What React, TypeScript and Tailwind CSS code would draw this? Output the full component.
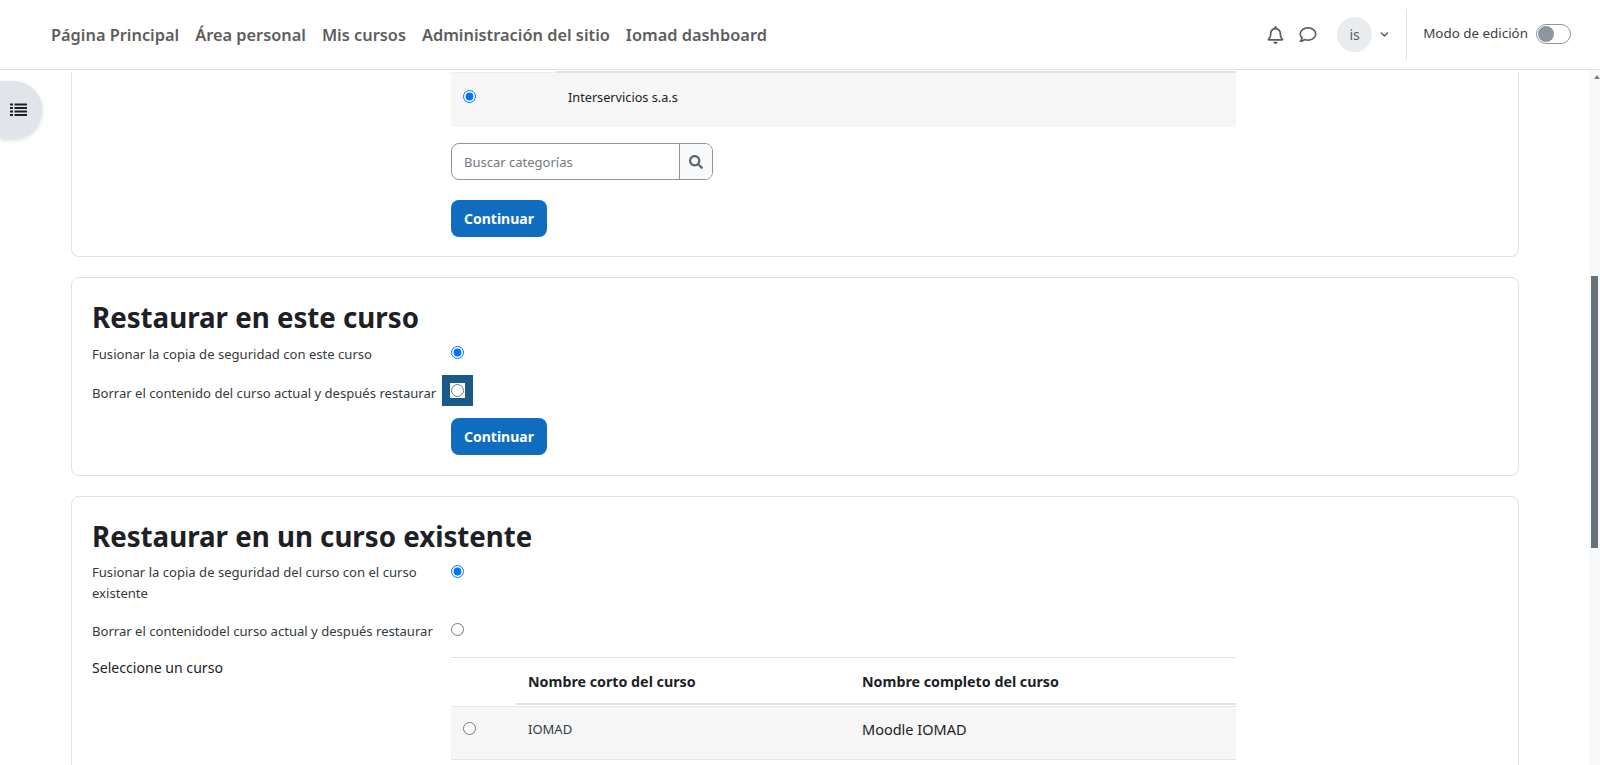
import React from "react";
import { FaRegBell, FaRegComment, FaSearch, FaChevronDown } from "react-icons/fa";

const navItems = ["Página Principal", "Área personal", "Mis cursos", "Administración del sitio", "Iomad dashboard"];

function Radio({ checked = false, className = "" }: { checked?: boolean; className?: string }) {
  return <input type="radio" defaultChecked={checked} className={`m-0 w-[13px] h-[13px] accent-[#0075ff] ${className}`} />;
}

function Header() {
  return (
    <header className="h-[70px] shrink-0 bg-white border-b border-[#dee2e6] flex items-center pl-[51px] pr-[29px]">
      <nav className="flex gap-[16px] text-[16.35px] font-semibold text-[#5d5d5d] mt-[1px]">
        {navItems.map((item) => (
          <span key={item}>{item}</span>
        ))}
      </nav>
      <div className="ml-auto flex items-center text-[#5d5d5d]">
        <FaRegBell className="w-[17px] h-[18px]" />
        <FaRegComment className="w-[18px] h-[17px] ml-[15px]" />
        <div className="w-[35px] h-[35px] rounded-full bg-[#e9ecef] flex items-center justify-center ml-[20px] text-[14px]">is</div>
        <FaChevronDown className="w-[9px] h-[9px] ml-[8px]" />
        <div className="w-px h-[51px] bg-[#dee2e6] ml-[17px]" />
        <span className="ml-[16px] text-[13.4px] text-[#3d3d3d] -mt-[3px]">Modo de edición</span>
        <div className="ml-[8px] w-[35px] h-[20px] rounded-full border border-[#8f959e] flex items-center pl-[1px] -mt-[1px]">
          <div className="w-[16px] h-[16px] rounded-full bg-[#8f959e]" />
        </div>
      </div>
    </header>
  );
}

function Button() {
  return (
    <button className="w-[96px] h-[37px] rounded-[8px] bg-[#0f6cbf] text-white text-[14px] font-bold">Continuar</button>
  );
}

function Row({ label, children, height }: { label: React.ReactNode; children: React.ReactNode; height: string }) {
  return (
    <div className={`flex ${height}`}>
      <div className="w-[359px] shrink-0 text-[13.08px] leading-[21px] text-[#343a40] pr-[14px]">{label}</div>
      <div>{children}</div>
    </div>
  );
}

function App() {
  return (
    <div className="w-[1600px] h-[765px] overflow-hidden flex flex-col bg-white text-[#1d2125] font-['Noto_Sans','Open_Sans',sans-serif]">
      <Header />
      <div className="relative flex flex-1 min-h-0">
        <button className="absolute left-0 top-[11px] w-[42px] h-[57px] rounded-r-[28px] bg-[#e1e4e9] shadow-[0_2px_4px_rgba(0,0,0,0.15)] flex items-center justify-center pr-[6px]">
          <svg width="17" height="14" viewBox="0 0 17 14" fill="#1d2125">
            <rect x="0" y="0.5" width="3" height="2" />
            <rect x="4.5" y="0.5" width="12.5" height="2" />
            <rect x="0" y="4" width="3" height="2" />
            <rect x="4.5" y="4" width="12.5" height="2" />
            <rect x="0" y="7.5" width="3" height="2" />
            <rect x="4.5" y="7.5" width="12.5" height="2" />
            <rect x="0" y="11" width="3" height="2" />
            <rect x="4.5" y="11" width="12.5" height="2" />
          </svg>
        </button>

        <main className="flex-1 min-w-0 overflow-hidden pl-[71px]">
          {/* first card, scrolled under the header */}
          <section className="w-[1448px] h-[185px] border border-t-0 border-[#dee2e6] rounded-b-[8px] pl-[379px]">
            <div className="w-[785px] mt-[2px] border-t border-[#eceef0] h-[55px] bg-[#f6f6f6] flex relative">
              <div className="w-[117px] pl-[12px] pt-[17px]">
                <Radio checked className="block" />
              </div>
              <span className="text-[12.7px] pt-[15px]">Interservicios s.a.s</span>
              <div className="absolute left-[105px] right-0 -top-[2px] h-[2px] bg-[#dee2e6]" />
            </div>
            <div className="mt-[16px] w-[262px] h-[37px] flex border border-[#8f959e] rounded-[8px] overflow-hidden">
              <input
                placeholder="Buscar categorías"
                className="flex-1 min-w-0 pl-[12px] pt-[2px] text-[13px] text-[#495057] placeholder:text-[#727a82] outline-none"
              />
              <div className="w-[33px] border-l border-[#8f959e] bg-[#f8f9fa] flex items-center justify-center text-[#5d6670]">
                <FaSearch className="w-[14px] h-[14px]" />
              </div>
            </div>
            <div className="mt-[20px]">
              <Button />
            </div>
          </section>

          <section className="w-[1448px] h-[199px] mt-[20px] border border-[#dee2e6] rounded-[8px] pl-[20px] pt-[18px]">
            <h2 className="text-[27.7px] leading-[42px] font-bold">Restaurar en este curso</h2>
            <Row label="Fusionar la copia de seguridad con este curso" height="h-[39px] pt-[6px]">
              <Radio checked className="block mt-[2px]" />
            </Row>
            <Row label="Borrar el contenido del curso actual y después restaurar" height="h-[41px] pt-[6px]">
              <span className="inline-flex w-[15px] h-[15px] -ml-[1px] items-center justify-center bg-white shadow-[0_0_0_8px_#1a5a8a] align-top">
                <Radio />
              </span>
            </Row>
            <div className="pl-[359px]">
              <Button />
            </div>
          </section>

          <section className="w-[1448px] h-[400px] mt-[20px] border border-[#dee2e6] rounded-[8px] pl-[20px] pt-[18px]">
            <h2 className="text-[27.7px] leading-[42px] font-bold">Restaurar en un curso existente</h2>
            <Row
              label={
                <>
                  Fusionar la copia de seguridad del curso con el curso
                  <br />
                  existente
                </>
              }
              height="h-[63px] pt-[5px]"
            >
              <Radio checked className="block mt-[3px]" />
            </Row>
            <Row label="Borrar el contenidodel curso actual y después restaurar" height="h-[37px] pt-[1px]">
              <Radio className="block mt-[2px]" />
            </Row>
            <div className="flex">
              <div className="w-[359px] shrink-0 text-[14.1px] leading-[22px] text-[#1d2125]">Seleccione un curso</div>
              <div className="w-[785px] border-t border-[#dee2e6] relative">
                <div className="h-[47px] flex items-center text-[14.25px] font-bold pl-[77px]">
                  <span className="w-[334px]">Nombre corto del curso</span>
                  <span>Nombre completo del curso</span>
                </div>
                <div className="absolute left-[65px] right-0 top-[45px] h-[2px] bg-[#dee2e6]" />
                <div className="h-[54px] mt-[1px] border-t border-b border-[#e4e7ea] bg-[#f6f6f6] flex items-start pt-[13px] pl-[12px]">
                  <span className="w-[65px] flex pt-[2px]">
                    <Radio />
                  </span>
                  <span className="w-[334px] text-[13px] text-[#343a40]">IOMAD</span>
                  <span className="text-[14.5px] -mt-[1px]">Moodle IOMAD</span>
                </div>
              </div>
            </div>
          </section>
        </main>

        {/* page scrollbar */}
        <div className="w-[11px] shrink-0 bg-[#f8f9fa] relative pl-[2px]">
          <div className="mt-[5px] w-0 h-0 ml-[3px] border-x-[3px] border-x-transparent border-b-[4px] border-b-[#7a7f85]" />
          <div className="absolute left-[2px] top-[206px] w-[7px] h-[272px] bg-[#67727b]" />
        </div>
      </div>
    </div>
  );
}

export default App;
